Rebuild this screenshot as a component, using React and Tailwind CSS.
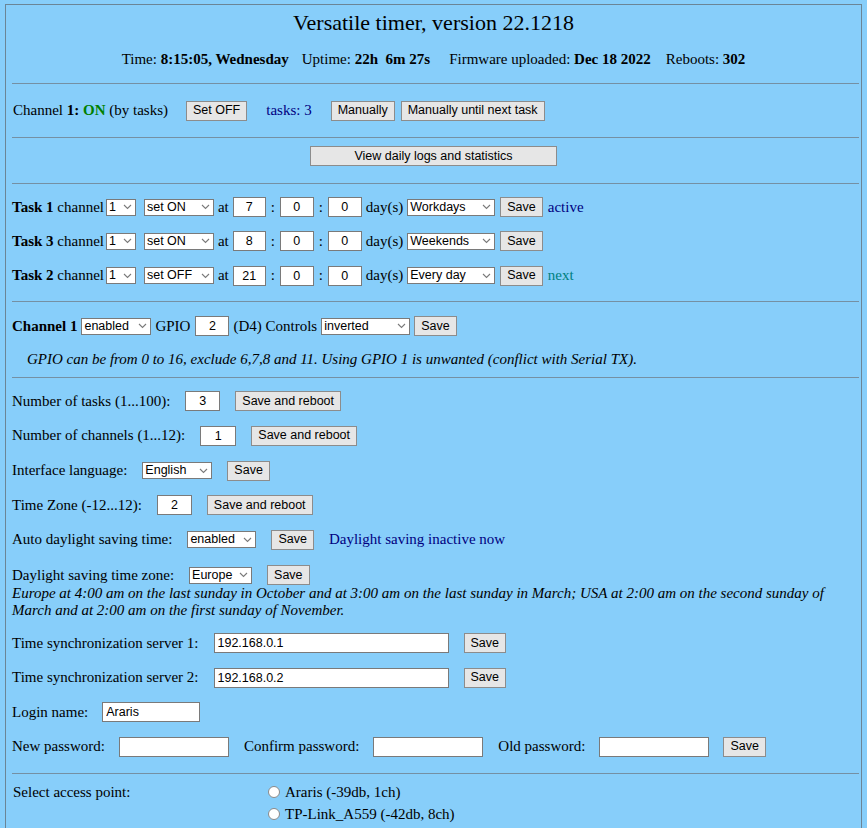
import React from "react";

const ctl = "font-['Liberation_Sans',Arial,sans-serif] text-[12.5px] text-black";

function Btn({ children, className = "" }) {
  return (
    <button
      className={`${ctl} h-[20px] px-[6px] border border-[#8c8c8c] bg-[#e6e6e6] leading-none flex items-center justify-center shrink-0 ${className}`}
    >
      {children}
    </button>
  );
}

function Sel({ value, className = "" }) {
  return (
    <div
      className={`${ctl} h-[17px] border border-[#7a7a7a] bg-white flex items-center justify-between pl-[2px] pr-[3px] leading-none shrink-0 ${className}`}
    >
      <span>{value}</span>
      <svg width="9" height="6" viewBox="0 0 9 6" className="shrink-0">
        <polyline points="1,1 4.5,4.5 8,1" fill="none" stroke="#7a7a7a" strokeWidth="1.1" />
      </svg>
    </div>
  );
}

function Inp({ value = "", className = "", center = false }) {
  return (
    <input
      readOnly
      value={value}
      className={`${ctl} h-[20px] border border-[#7a7a7a] bg-white px-[3px] outline-none shrink-0 ${center ? "text-center" : "text-left"} ${className}`}
    />
  );
}

function Hr() {
  return <div className="h-[1px] bg-[#7590a3] ml-[6px] mr-[2px]" />;
}

function TaskRow({ n, action, actW, hour, days, note, noteCls, h }) {
  return (
    <div className={`flex items-center ${h}`}>
      <span className="whitespace-nowrap">
        <b>Task {n}</b> channel
      </span>
      <Sel value="1" className="ml-[2px] w-[30px]" />
      <Sel value={action} className={`ml-[8px] ${actW}`} />
      <span className="ml-[4px]">at</span>
      <Inp value={hour} center className="ml-[4px] w-[33px]" />
      <span className="w-[14px] text-center">:</span>
      <Inp value="0" center className="w-[34px]" />
      <span className="w-[14px] text-center">:</span>
      <Inp value="0" center className="w-[34px]" />
      <span className="ml-[4px]">day(s)</span>
      <Sel value={days} className="ml-[4px] w-[88px]" />
      <Btn className="ml-[5px]">Save</Btn>
      {note && <span className={`ml-[5px] ${noteCls}`}>{note}</span>}
    </div>
  );
}

export default function App() {
  return (
    <div className="min-h-screen bg-[#87cefa] pt-[4px] px-[5px] font-['Liberation_Serif','Times_New_Roman',serif] text-[15px] text-black">
      <div className="border-t border-l border-r border-[#6b8596] min-h-[830px]">
        <div className="h-[34px] flex items-center justify-center text-[22px]">
          Versatile timer, version 22.1218
        </div>
        <div className="h-[40px] flex items-center justify-center whitespace-pre">
          <span>
            Time: <b>8:15:05, Wednesday</b>
          </span>
          <span className="ml-[13px]">
            Uptime: <b>22h  6m 27s</b>
          </span>
          <span className="ml-[19px]">
            Firmware uploaded: <b>Dec 18 2022</b>
          </span>
          <span className="ml-[15px]">
            Reboots: <b>302</b>
          </span>
        </div>
        <div className="mt-[4px]">
          <Hr />
        </div>

        {/* Channel status */}
        <div className="h-[53px] flex items-center pl-[7px]">
          <span className="whitespace-nowrap">
            Channel <b>1:</b> <b className="text-[#008000]">ON</b> (by tasks)
          </span>
          <Btn className="ml-[18px]">Set OFF</Btn>
          <span className="ml-[19px] text-[#000080]">tasks: 3</span>
          <Btn className="ml-[19px]">Manually</Btn>
          <Btn className="ml-[6px]">Manually until next task</Btn>
        </div>
        <Hr />

        <div className="h-[45px] pb-[9px] flex items-center justify-center">
          <Btn className="w-[247px]">View daily logs and statistics</Btn>
        </div>
        <Hr />

        {/* Tasks */}
        <div className="pt-[6px] pb-[8px] pl-[6px]">
          <TaskRow n={1} action="set ON" actW="w-[70px]" hour="7" days="Workdays" note="active" noteCls="text-[#000080]" h="h-[34px]" />
          <TaskRow n={3} action="set ON" actW="w-[70px]" hour="8" days="Weekends" h="h-[34px]" />
          <TaskRow n={2} action="set OFF" actW="w-[70px]" hour="21" days="Every day" note="next" noteCls="text-[#008080]" h="h-[35px]" />
        </div>
        <Hr />

        {/* Channel config */}
        <div className="pb-[9px] pl-[6px]">
          <div className="h-[48px] flex items-center">
            <b>Channel 1</b>
            <Sel value="enabled" className="ml-[4px] w-[70px]" />
            <span className="ml-[4px]">GPIO</span>
            <Inp value="2" center className="ml-[5px] w-[34px]" />
            <span className="ml-[4px] whitespace-nowrap">(D4) Controls</span>
            <Sel value="inverted" className="ml-[4px] w-[89px]" />
            <Btn className="ml-[4px]">Save</Btn>
          </div>
          <div className="h-[18px] flex items-center pl-[15px] italic whitespace-nowrap">
            GPIO can be from 0 to 16, exclude 6,7,8 and 11. Using GPIO 1 is unwanted (conflict with Serial TX).
          </div>
        </div>
        <Hr />

        {/* Settings */}
        <div className="pt-[6px] pb-[9px] pl-[6px]">
          <div className="h-[34px] flex items-center gap-[15px]">
            <span>Number of tasks (1...100):</span>
            <Inp value="3" center className="w-[35px]" />
            <Btn>Save and reboot</Btn>
          </div>
          <div className="h-[35px] flex items-center gap-[15px]">
            <span>Number of channels (1...12):</span>
            <Inp value="1" center className="w-[36px]" />
            <Btn>Save and reboot</Btn>
          </div>
          <div className="h-[35px] flex items-center gap-[15px]">
            <span>Interface language:</span>
            <Sel value="English" className="w-[70px]" />
            <Btn>Save</Btn>
          </div>
          <div className="h-[34px] flex items-center gap-[15px]">
            <span>Time Zone (-12...12):</span>
            <Inp value="2" center className="w-[35px]" />
            <Btn>Save and reboot</Btn>
          </div>
          <div className="h-[35px] flex items-center gap-[15px]">
            <span>Auto daylight saving time:</span>
            <Sel value="enabled" className="w-[69px]" />
            <Btn>Save</Btn>
            <span className="text-[#000080]">Daylight saving inactive now</span>
          </div>
          <div className="mt-[8px] h-[20px] flex items-center gap-[15px]">
            <span>Daylight saving time zone:</span>
            <Sel value="Europe" className="w-[63px]" />
            <Btn>Save</Btn>
          </div>
          <div className="italic leading-[17px] whitespace-nowrap">
            Europe at 4:00 am on the last sunday in October and at 3:00 am on the last sunday in March; USA at 2:00 am on the second sunday of
            <br />
            March and at 2:00 am on the first sunday of November.
          </div>
          <div className="mt-[7px] h-[34px] flex items-center gap-[15px]">
            <span>Time synchronization server 1:</span>
            <Inp value="192.168.0.1" className="w-[235px]" />
            <Btn>Save</Btn>
          </div>
          <div className="h-[35px] flex items-center gap-[15px]">
            <span>Time synchronization server 2:</span>
            <Inp value="192.168.0.2" className="w-[235px]" />
            <Btn>Save</Btn>
          </div>
          <div className="h-[34px] flex items-center gap-[14px]">
            <span>Login name:</span>
            <Inp value="Araris" className="w-[98px]" />
          </div>
          <div className="h-[35px] flex items-center gap-[14px]">
            <span>New password:</span>
            <Inp className="w-[110px]" />
            <span className="ml-[1px]">Confirm password:</span>
            <Inp className="w-[110px]" />
            <span className="ml-[1px]">Old password:</span>
            <Inp className="w-[110px]" />
            <Btn>Save</Btn>
          </div>
        </div>
        <Hr />

        {/* Access point */}
        <div className="pt-[9px] pl-[7px] flex">
          <div className="w-[255px] h-[18px] flex items-center">Select access point:</div>
          <div className="flex flex-col gap-[4px]">
            <div className="h-[18px] flex items-center gap-[5px]">
              <span className="w-[12px] h-[12px] rounded-full border border-[#8a8a8a] bg-white" />
              <span>Araris (-39db, 1ch)</span>
            </div>
            <div className="h-[18px] flex items-center gap-[5px]">
              <span className="w-[12px] h-[12px] rounded-full border border-[#8a8a8a] bg-white" />
              <span>TP-Link_A559 (-42db, 8ch)</span>
            </div>
          </div>
        </div>
      </div>
    </div>
  );
}
